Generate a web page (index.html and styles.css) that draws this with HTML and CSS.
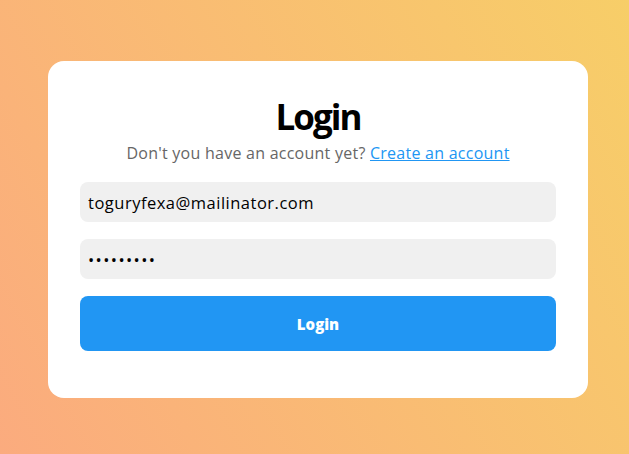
FILE: index.html
```html
<!DOCTYPE html>
<html lang="en">
<head>
<meta charset="utf-8">
<title>Login</title>
<link rel="stylesheet" href="styles.css">
</head>
<body>
<main class="card">
  <h1 class="title">Login</h1>
  <p class="subtitle">Don't you have an account yet? <a class="link" href="#">Create an account</a></p>
  <form class="form">
    <input class="field" type="email" value="toguryfexa@mailinator.com">
    <input class="field field-pass" type="password" value="123456789">
    <button class="btn" type="button">Login</button>
  </form>
</main>
</body>
</html>
```
FILE: styles.css
```css
html, body {
  margin: 0;
  height: 100%;
}
body {
  background: linear-gradient(62deg, #fbab7e 0%, #f7ce68 100%);
  font-family: "Open Sans", "Noto Sans", sans-serif;
  display: flex;
  align-items: flex-start;
  padding: 61px 0 0 48px;
  box-sizing: border-box;
}
.card {
  width: 540px;
  box-sizing: border-box;
  background: #fff;
  border-radius: 16px;
  padding: 32px 32px 47px;
  display: flex;
  flex-direction: column;
  align-items: center;
}
.title {
  margin: 0;
  font-size: 35px;
  line-height: 48px;
  font-weight: 700;
  color: #000;
  letter-spacing: -2px;
}
.subtitle {
  margin: 0;
  font-size: 16px;
  line-height: 24px;
  color: #666;
  letter-spacing: 0.25px;
}
.link {
  color: #2196f3;
  text-decoration: underline;
}
.form {
  width: 100%;
  margin-top: 17px;
  display: flex;
  flex-direction: column;
  gap: 17px;
}
.field {
  height: 40px;
  box-sizing: border-box;
  border: none;
  outline: none;
  border-radius: 8px;
  background: #f0f0f0;
  padding: 0 8px;
  font-family: "Open Sans", "Noto Sans", sans-serif;
  font-size: 16.5px;
  letter-spacing: 0.5px;
  color: #000;
}
.field-pass {
  letter-spacing: 1.4px;
}
.btn {
  height: 55px;
  border: none;
  border-radius: 8px;
  background: #2196f3;
  color: #fff;
  font-family: "Open Sans", "Noto Sans", sans-serif;
  font-weight: 800;
  font-size: 15px;
  cursor: pointer;
}
```
